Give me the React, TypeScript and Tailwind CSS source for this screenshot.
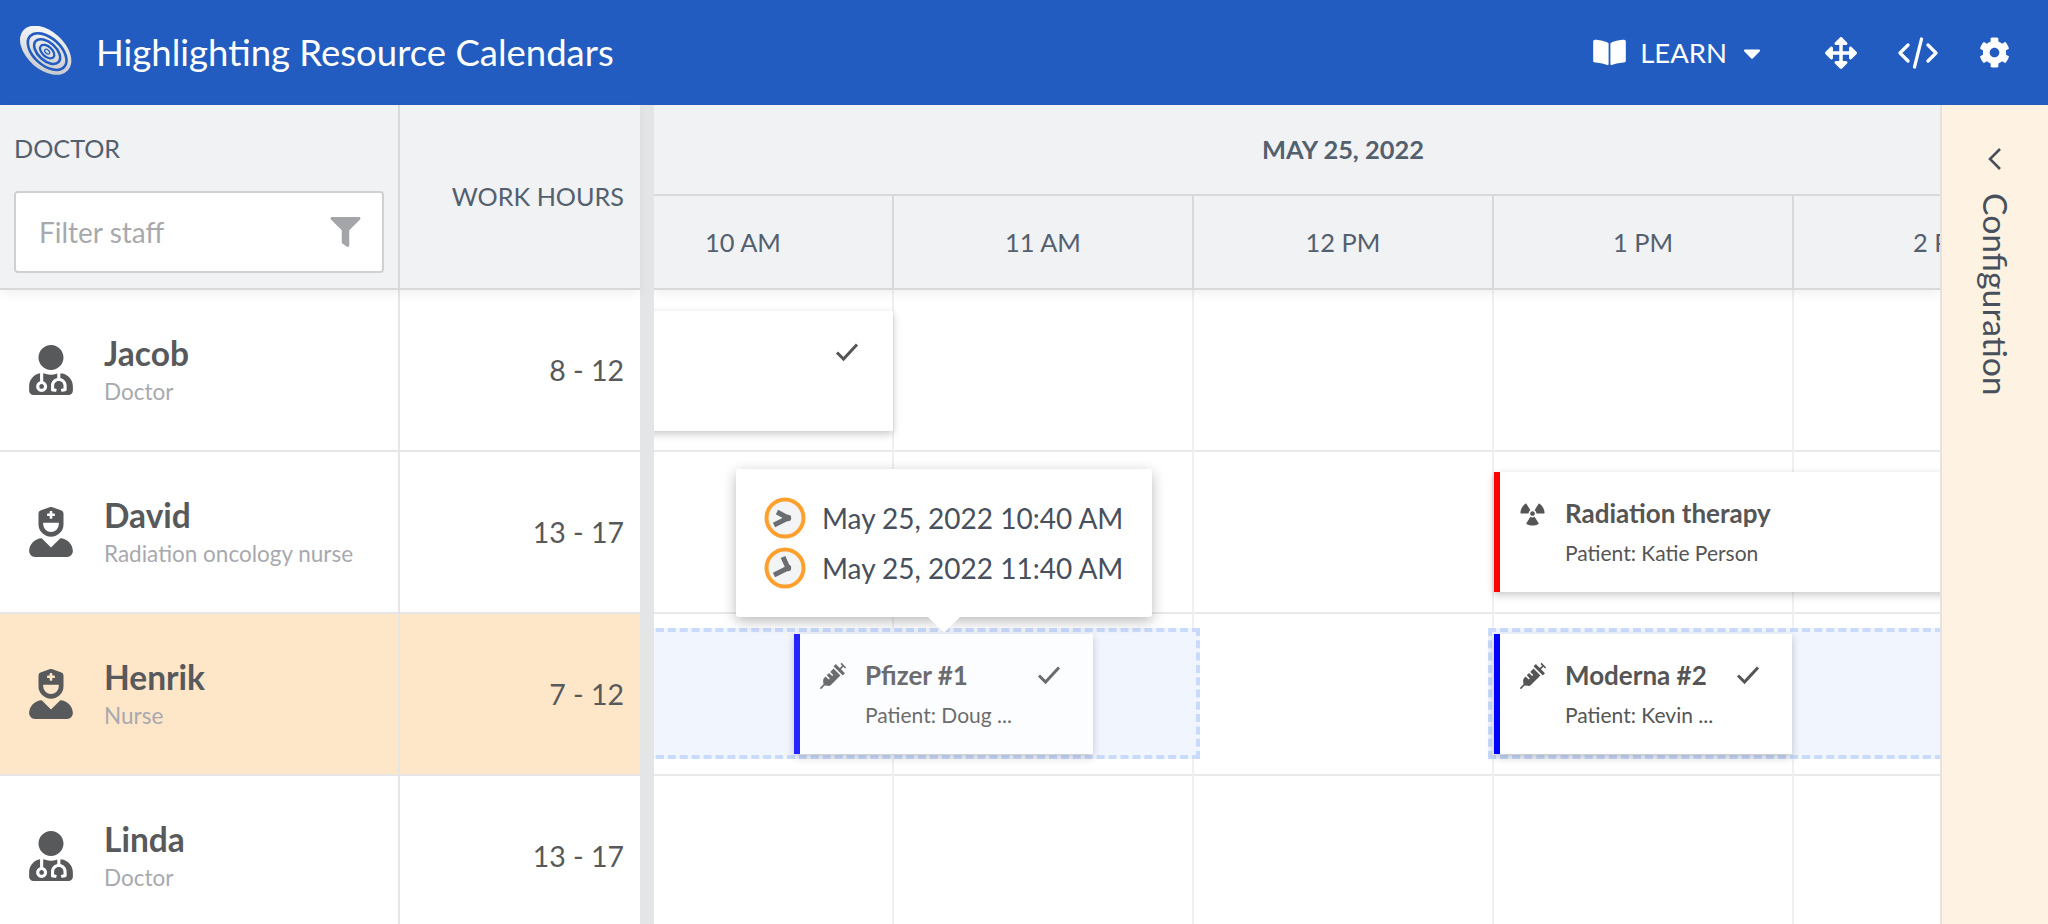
import React from "react";
import { FaBookOpen, FaCaretDown, FaArrowsAlt, FaCog, FaFilter, FaSyringe, FaRadiation, FaUserMd, FaUserNurse } from "react-icons/fa";

const Logo = () => (
  <svg width="54" height="54" viewBox="0 0 54 54" className="shrink-0">
    <defs>
      <linearGradient id="lg" x1="0" y1="0" x2="1" y2="1">
        <stop offset="0" stopColor="#ffffff" />
        <stop offset="1" stopColor="#bfc1c5" />
      </linearGradient>
    </defs>
    <g transform="rotate(42 27 25)">
      <ellipse cx="27" cy="24" rx="30" ry="19" fill="url(#lg)" />
      <ellipse cx="29" cy="24" rx="23" ry="13.5" fill="none" stroke="#235cc0" strokeWidth="2.6" />
      <ellipse cx="29" cy="24" rx="15.5" ry="9" fill="none" stroke="#235cc0" strokeWidth="2.6" />
      <ellipse cx="29" cy="24" rx="8.5" ry="5" fill="none" stroke="#235cc0" strokeWidth="2.2" />
      <ellipse cx="29" cy="24" rx="3" ry="1.8" fill="none" stroke="#235cc0" strokeWidth="1.2" />
    </g>
  </svg>
);

const Clock = ({ minute }: { minute: string }) => (
  <svg width="42" height="42" viewBox="0 0 42 42" className="shrink-0">
    <circle cx="21" cy="21" r="18.5" fill="#f3f4f6" stroke="#ffa02e" strokeWidth="4" />
    <path d={minute} fill="none" stroke="#6b6d70" strokeWidth="5" strokeLinecap="butt" />
    <circle cx="24" cy="21" r="3.2" fill="#6b6d70" />
  </svg>
);

const Check = ({ color = "#555" }: { color?: string }) => (
  <svg width="24" height="20" viewBox="0 0 24 20" className="shrink-0">
    <path d="M2 10.5 L8.5 17 L22 2.5" fill="none" stroke={color} strokeWidth="3" />
  </svg>
);

const Code = () => (
  <svg width="40" height="32" viewBox="0 0 40 32" className="shrink-0">
    <path d="M10 8 L2 16 L10 24 M30 8 L38 16 L30 24 M23.5 2 L16.5 30" fill="none" stroke="#fff" strokeWidth="3.2" strokeLinecap="round" strokeLinejoin="round" />
  </svg>
);

const people = [
  { name: "Jacob", role: "Doctor", hours: "8 - 12", icon: "doc", active: false },
  { name: "David", role: "Radiation oncology nurse", hours: "13 - 17", icon: "nurse", active: false },
  { name: "Henrik", role: "Nurse", hours: "7 - 12", icon: "nurse", active: true },
  { name: "Linda", role: "Doctor", hours: "13 - 17", icon: "doc", active: false },
];

const times = ["10 AM", "11 AM", "12 PM", "1 PM", "2 PM"];

function EventCard({ title, sub, bar, icon, check, className }: { title: string; sub: string; bar: string; icon: React.ReactNode; check?: boolean; className: string }) {
  return (
    <div className={`absolute top-0 h-[120px] flex bg-white border-l-[6px] pl-5 pr-8 pt-[24px] text-[#555555] shadow-[0_3px_8px_rgba(0,0,0,0.22)] ${bar} ${className}`}>
      <div className="w-[46px] shrink-0 pt-[5px]">{icon}</div>
      <div className="flex-1 min-w-0 -ml-px">
        <div className="flex items-center justify-between h-[34px]">
          <span className="text-[26px] font-bold leading-[34px] whitespace-nowrap">{title}</span>
          {check && <Check />}
        </div>
        <div className="text-[21px] leading-[26px] mt-[10px] whitespace-nowrap">{sub}</div>
      </div>
    </div>
  );
}

export default function App() {
  return (
    <div className="w-[2048px] h-[924px] overflow-hidden flex flex-col bg-white font-['Lato','Noto_Sans',sans-serif]">
      <header className="h-[105px] shrink-0 bg-[#235cc0] text-white flex items-center pl-[18px] pr-[38px]">
        <Logo />
        <h1 className="ml-[24px] text-[36.5px] font-normal leading-none">Highlighting Resource Calendars</h1>
        <div className="ml-auto flex items-center">
          <FaBookOpen className="w-[33px] h-[29px]" />
          <span className="ml-[14px] text-[27.5px] leading-none">LEARN</span>
          <FaCaretDown className="ml-[11px] w-[28px] h-[28px]" />
          <FaArrowsAlt className="ml-[59px] w-[32px] h-[32px]" />
          <div className="ml-[41px]"><Code /></div>
          <FaCog className="ml-[41px] w-[31px] h-[31px]" />
        </div>
      </header>

      <div className="flex-1 flex min-h-0">
        <div className="w-[640px] shrink-0 flex flex-col">
          <div className="h-[185px] shrink-0 flex bg-[#f1f2f4] border-b-2 border-[#d8d9db] text-[#53606e] relative z-10 shadow-[0_4px_10px_rgba(0,0,0,0.06)]">
            <div className="w-[400px] shrink-0 border-r-2 border-[#d8d9db] pl-[14px] pr-[14px] pt-[27px]">
              <div className="text-[25.2px] leading-[32px]">DOCTOR</div>
              <div className="mt-[28px] -translate-y-px h-[82px] bg-white border-2 border-[#cfd0d2] rounded-[4px] flex items-center justify-between pl-[23px] pr-[20px]">
                <span className="text-[28px] text-[#a8a9ac]">Filter staff</span>
                <FaFilter className="w-[33px] h-[30px] text-[#a4a5a8]" />
              </div>
            </div>
            <div className="flex-1 flex items-center justify-end pr-4 text-[25.2px]">WORK HOURS</div>
          </div>
          {people.map((p) => (
            <div key={p.name} className={`h-[162px] shrink-0 flex border-b-2 border-[#e6e6e6] ${p.active ? "bg-[#fee6c8]" : "bg-white"}`}>
              <div className="w-[400px] shrink-0 border-r-2 border-[#e6e6e6] flex items-center pl-[29px]">
                {p.icon === "doc" ? <FaUserMd className="w-[44px] h-[50px] text-[#58595b] shrink-0" /> : <FaUserNurse className="w-[44px] h-[50px] text-[#58595b] shrink-0" />}
                <div className="ml-[31px]">
                  <div className="text-[33.5px] font-bold leading-[40px] text-[#58595b] -mt-[2px]">{p.name}</div>
                  <div className="text-[22.5px] leading-[28px] mt-[5px] text-[#a8a9ae]">{p.role}</div>
                </div>
              </div>
              <div className="flex-1 flex items-center justify-end pr-4 text-[28.5px] text-[#58595b]">{p.hours}</div>
            </div>
          ))}
        </div>

        <div className="w-[14px] shrink-0 bg-[#e4e5e7]" />

        <div className="flex-1 min-w-0 flex flex-col overflow-hidden">
          <div className="h-[185px] shrink-0 flex flex-col bg-[#f1f2f4] text-[#53606e] relative z-10 shadow-[0_4px_10px_rgba(0,0,0,0.06)]">
            <div className="h-[91px] shrink-0 border-b-2 border-[#d8d9db] flex items-center justify-center pl-[92px] text-[25.4px] font-bold">MAY 25, 2022</div>
            <div className="flex-1 flex -ml-[60px] border-b-2 border-[#d8d9db]">
              {times.map((t) => (
                <div key={t} className="w-[300px] shrink-0 border-r-2 border-[#d8d9db] flex items-center justify-center text-[25.4px]">{t}</div>
              ))}
            </div>
          </div>
          <div className="flex-1 relative overflow-hidden">
            {people.map((p) => (
              <div key={p.name} className="h-[162px] border-b-2 border-[#e9e9e9]" />
            ))}
            <div className="absolute inset-0 flex -ml-[60px]">
              {times.map((t) => (
                <div key={t} className="w-[300px] shrink-0 border-r-2 border-[#f0f0f0]" />
              ))}
            </div>

            <div className="absolute left-[-10px] top-[338px] w-[556px] h-[131px] bg-[#eff4fe]/90 border-4 border-dashed border-[#c9dafb]" />
            <div className="absolute left-[834px] top-[338px] w-[600px] h-[131px] bg-[#eff4fe]/90 border-4 border-dashed border-[#c9dafb]" />

            <div className="absolute left-[-100px] top-[21px] w-[339px] h-[120px] bg-white shadow-[0_3px_8px_rgba(0,0,0,0.22)] flex items-start justify-end pr-[34px] pt-[31px]">
              <Check />
            </div>

            <EventCard
              className="!top-[182px] left-[840px] w-[600px] border-[#ff0000]"
              bar=""
              title="Radiation therapy"
              sub="Patient: Katie Person"
              icon={<FaRadiation className="w-[25px] h-[25px] text-[#555555]" />}
            />
            <EventCard
              className="!top-[344px] left-[140px] w-[299px] opacity-85"
              bar="border-[#0000ff]"
              title="Pfizer #1"
              sub="Patient: Doug ..."
              check
              icon={<FaSyringe className="w-[26px] h-[26px] text-[#555555]" />}
            />
            <EventCard
              className="!top-[344px] left-[840px] w-[298px]"
              bar="border-[#0000ff]"
              title="Moderna #2"
              sub="Patient: Kevin ..."
              check
              icon={<FaSyringe className="w-[26px] h-[26px] text-[#555555]" />}
            />

            <div className="absolute left-[82px] top-[179px] w-[416px] h-[148px] bg-white rounded-[3px] shadow-[0_4px_14px_rgba(0,0,0,0.28)] flex flex-col justify-center pl-[28px] text-[28px] text-[#47505c]">
              <div className="h-[50px] flex items-center gap-[16px]"><Clock minute="M24 21 L13 15 M24 21 L10 28" /><span className="whitespace-nowrap">May 25, 2022 10:40 AM</span></div>
              <div className="h-[50px] flex items-center gap-[16px]"><Clock minute="M24 21 L19 10 M24 21 L10 28" /><span className="whitespace-nowrap">May 25, 2022 11:40 AM</span></div>
              <div className="absolute left-[196px] bottom-[-11px] w-[24px] h-[24px] bg-white rotate-45 rounded-[2px]" />
            </div>
          </div>
        </div>

        <div className="w-[108px] shrink-0 bg-[#fef3e2] border-l-2 border-[#e3e3e3] flex flex-col items-center pt-[42px] text-[#47505c]">
          <svg width="16" height="24" viewBox="0 0 16 24" className="shrink-0">
            <path d="M13 2 L3 12 L13 22" fill="none" stroke="#47505c" strokeWidth="2.6" />
          </svg>
          <div className="mt-[22px] text-[33.7px] leading-none [writing-mode:vertical-rl] whitespace-nowrap">Configuration</div>
        </div>
      </div>
    </div>
  );
}
